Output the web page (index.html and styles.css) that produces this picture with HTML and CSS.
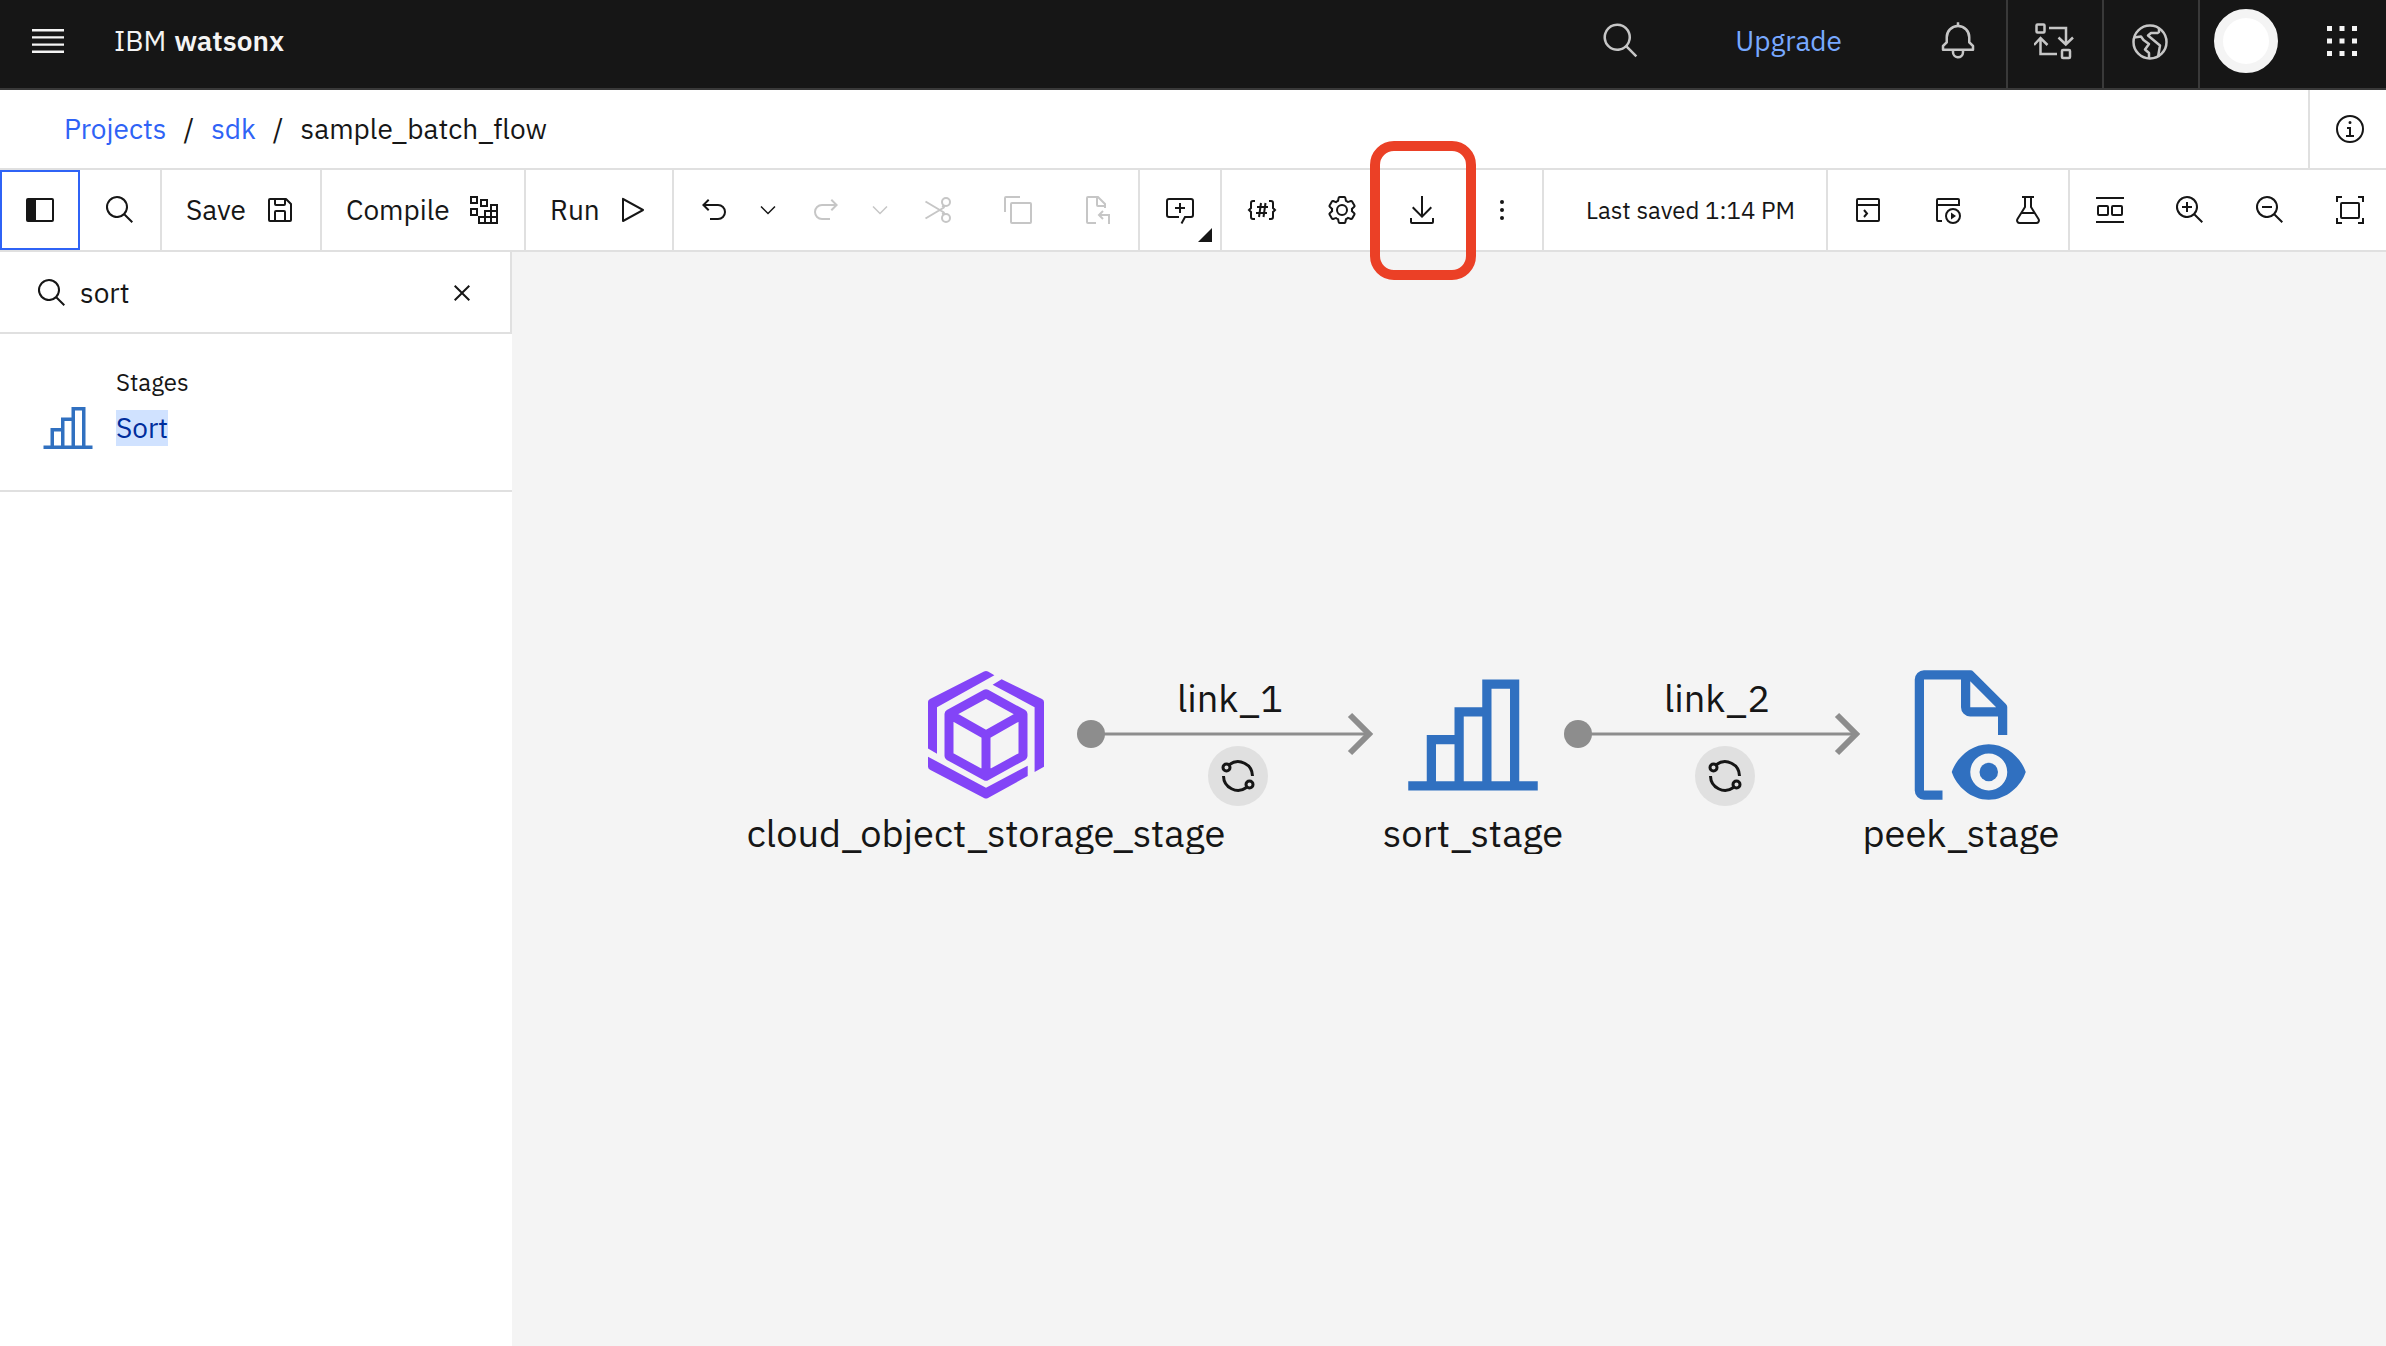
FILE: index.html
```html
<!DOCTYPE html>
<html lang="en">
<head>
<meta charset="utf-8">
<meta name="viewport" content="width=device-width, initial-scale=1">
<title>sample_batch_flow - IBM watsonx</title>
<link rel="stylesheet" href="styles.css">
</head>
<body>
<svg class="symbols" aria-hidden="true">
  <symbol id="search" viewBox="0 0 32 32"><path d="M29 27.586l-7.552-7.552a11.018 11.018 0 1 0-1.414 1.414L27.586 29zM4 13a9 9 0 1 1 9 9a9.01 9.01 0 0 1-9-9z"/></symbol>
  <symbol id="chevron" viewBox="0 0 32 32"><path d="M16 22L6 12l1.4-1.4 8.6 8.6 8.6-8.6L26 12z"/></symbol>
  <symbol id="undo" viewBox="0 0 32 32"><path d="M20 10H7.815l3.587-3.586L10 5 4 11l6 6 1.402-1.415L7.818 12H20a6 6 0 0 1 0 12H12v2h8a8 8 0 0 0 0-16z"/></symbol>
  <symbol id="bars" viewBox="0 0 32 32"><path d="M2 26h4V16h6v-6h6V4h8v22h4v2H2zM8 18v8h4v-8zM14 12v14h4V12zM20 6v20h4V6z"/></symbol>
  <symbol id="sync" viewBox="-20 -20 40 40"><g fill="none" stroke="currentColor" stroke-width="3"><circle cx="-11.500" cy="-8.500" r="3.500"/><circle cx="11.500" cy="8.500" r="3.500"/><path d="M-8.500-11.500A14.500 14.500 0 0 1 14.500 0M8.500 11.500A14.500 14.500 0 0 1-14.500 0"/></g></symbol>
</svg>

<header class="topbar">
  <button class="menu" aria-label="Menu"><svg viewBox="0 0 20 20"><path d="M2 4h16v1.200H2zM2 7.600h16v1.200H2zM2 11.200h16v1.200H2zM2 14.800h16V16H2z"/></svg></button>
  <a class="brand" href="#">IBM <b>watsonx</b></a>
  <button class="top-search" aria-label="Search"><svg><use href="#search"/></svg></button>
  <a class="upgrade" href="#">Upgrade</a>
  <button class="cell" aria-label="Notifications"><svg viewBox="0 0 32 32"><path d="M28.707 19.293L26 16.586V13a10.014 10.014 0 0 0-9-9.950V1h-2v2.050A10.014 10.014 0 0 0 6 13v3.586l-2.707 2.707A1 1 0 0 0 3 20v3a1 1 0 0 0 1 1h7v.777a5.152 5.152 0 0 0 4.500 5.199A5.006 5.006 0 0 0 21 25v-1h7a1 1 0 0 0 1-1v-3a1 1 0 0 0-.293-.707zM19 25a3 3 0 0 1-6 0v-1h6zm8-3H5v-1.586l2.707-2.707A1 1 0 0 0 8 17v-4a8 8 0 0 1 16 0v4a1 1 0 0 0 .293.707L27 20.414z"/></svg></button>
  <button class="cell" aria-label="Switch workspace"><svg viewBox="0 0 40 40"><g fill="none" stroke="currentColor" stroke-width="2.500"><rect x="2.500" y="3.500" width="8" height="8" rx="1"/><rect x="28" y="29" width="8" height="8" rx="1"/><path d="M15 7h17v16M24.500 16.500l7.300 7 7.200-7M23 33H6.500V17M0 24l6.500-7 7 7"/></g></svg></button>
  <button class="cell" aria-label="Region"><svg viewBox="-20 -21 40 40"><g fill="none" stroke="currentColor" stroke-width="2.500" stroke-linejoin="round"><circle r="16.500"/><path d="M-16-4.500L-9-5.500-6.500-2-1 2l-4 5.500L-1 11v6M9-14v4l-1.500 1H1L-2-6.500 10 3.500 8 15"/></g></svg></button>
  <button class="account" aria-label="Account"><span class="avatar"></span></button>
  <button class="cell last" aria-label="App switcher"><svg viewBox="0 0 32 32"><path d="M4 4h4v4H4zM14 4h4v4h-4zM24 4h4v4h-4zM4 14h4v4H4zM14 14h4v4h-4zM24 14h4v4h-4zM4 24h4v4H4zM14 24h4v4h-4zM24 24h4v4h-4z"/></svg></button>
</header>

<nav class="crumbs" aria-label="Breadcrumb">
  <ol>
    <li><a href="#">Projects</a></li>
    <li><a href="#">sdk</a></li>
    <li aria-current="page">sample_batch_flow</li>
  </ol>
  <button class="info" aria-label="Information"><svg viewBox="0 0 32 32"><path d="M17 22v-8h-4v2h2v6h-3v2h8v-2zM16 8a1.500 1.500 0 1 0 0 3 1.500 1.500 0 0 0 0-3z"/><circle cx="16" cy="16" r="13" fill="none" stroke="currentColor" stroke-width="2"/></svg></button>
</nav>

<div class="toolbar" role="toolbar" aria-label="Flow">
  <div class="group">
    <button class="tool active" aria-label="Palette"><svg viewBox="0 0 32 32"><path d="M28 4H4a2 2 0 0 0-2 2v20a2 2 0 0 0 2 2h24a2 2 0 0 0 2-2V6a2 2 0 0 0-2-2zm0 22H12V6h16z"/></svg></button>
    <button class="tool" aria-label="Find"><svg><use href="#search"/></svg></button>
  </div>
  <div class="group"><button class="labeled save">Save <svg viewBox="0 0 32 32"><path d="M27.710 9.290l-5-5A1 1 0 0 0 22 4H6a2 2 0 0 0-2 2v20a2 2 0 0 0 2 2h20a2 2 0 0 0 2-2V10a1 1 0 0 0-.290-.710zM12 6h8v4h-8zm8 20h-8v-8h8zm2 0v-8a2 2 0 0 0-2-2h-8a2 2 0 0 0-2 2v8H6V6h4v4a2 2 0 0 0 2 2h8a2 2 0 0 0 2-2V6.410l4 4V26z"/></svg></button></div>
  <div class="group"><button class="labeled compile">Compile <svg viewBox="0 0 32 32"><path fill="none" stroke="currentColor" stroke-width="2" d="M3 3h6v6H3zM13 6h6v6h-6zM3 15h6v6H3zM23 11h6v6h-6zM17 17h6v6h-6zM23 17h6v6h-6zM11 23h6v6h-6zM17 23h6v6h-6zM23 23h6v6h-6z"/></svg></button></div>
  <div class="group"><button class="labeled run">Run <svg viewBox="0 0 32 32"><path d="M7 28a1 1 0 0 1-1-1V5a1 1 0 0 1 1.482-.876l20 11a1 1 0 0 1 0 1.752l-20 11A1 1 0 0 1 7 28zM8 6.690v18.620L24.925 16z"/></svg></button></div>
  <div class="group">
    <button class="tool" aria-label="Undo"><svg><use href="#undo"/></svg></button>
    <button class="drop" aria-label="Undo history"><svg><use href="#chevron"/></svg></button>
    <button class="tool" aria-label="Redo" disabled><svg class="flip"><use href="#undo"/></svg></button>
    <button class="drop" aria-label="Redo history" disabled><svg><use href="#chevron"/></svg></button>
    <button class="tool" aria-label="Cut" disabled><svg viewBox="0 0 32 32"><g fill="none" stroke="currentColor" stroke-width="2"><circle cx="24" cy="8" r="4"/><circle cx="24" cy="24" r="4"/><path d="M3.500 7.500L22 18.500M3.500 24.500L22 13.500M20 12l3 1M20 20l3-1"/></g></svg></button>
    <button class="tool" aria-label="Copy" disabled><svg viewBox="0 0 32 32"><path d="M28 10v18H10V10h18m0-2H10a2 2 0 0 0-2 2v18a2 2 0 0 0 2 2h18a2 2 0 0 0 2-2V10a2 2 0 0 0-2-2z"/><path d="M4 18H2V4a2 2 0 0 1 2-2h14v2H4z"/></svg></button>
    <button class="tool" aria-label="Paste" disabled><svg viewBox="0 0 32 32"><path fill="none" stroke="currentColor" stroke-width="2" d="M14 29H6a1 1 0 0 1-1-1V4a1 1 0 0 1 1-1h10l7 7v4M15 3v8a1 1 0 0 0 1 1h7M27 30v-9H17M21 17l-4 4 4 4"/></svg></button>
  </div>
  <div class="group"><button class="tool more" aria-label="Add comment"><svg viewBox="0 0 32 32"><path fill="none" stroke="currentColor" stroke-width="2" d="M15 23H5a2 2 0 0 1-2-2V7a2 2 0 0 1 2-2h22a2 2 0 0 1 2 2v14a2 2 0 0 1-2 2h-6l-3.500 6.500M16 9v10M11 14h10"/></svg></button></div>
  <div class="group">
    <button class="tool" aria-label="Parameters"><svg viewBox="0 0 32 32"><path fill="none" stroke="currentColor" stroke-width="2" d="M9 7H7a2 2 0 0 0-2 2v5l-2 2 2 2v5a2 2 0 0 0 2 2h2M23 7h2a2 2 0 0 1 2 2v5l2 2-2 2v5a2 2 0 0 1-2 2h-2M15 9l-2 14M19.500 9l-2 14M11 13h11M10 19h11"/></svg></button>
    <button class="tool" aria-label="Settings"><svg viewBox="0 0 32 32"><path d="M27 16.760V15.230l1.920-1.680A2 2 0 0 0 29.300 11L26.940 7a2 2 0 0 0-1.730-1 2 2 0 0 0-.640.100l-2.430.820a11.350 11.350 0 0 0-1.310-.750l-.510-2.520a2 2 0 0 0-2-1.610H13.640a2 2 0 0 0-2 1.610l-.510 2.520a11.480 11.480 0 0 0-1.320.750L7.430 6.060A2 2 0 0 0 6.790 6 2 2 0 0 0 5.060 7L2.700 11a2 2 0 0 0 .410 2.510L5 15.240v1.530l-1.890 1.680A2 2 0 0 0 2.700 21l2.360 4a2 2 0 0 0 1.730 1 2 2 0 0 0 .640-.100l2.430-.820a11.350 11.350 0 0 0 1.310.750l.510 2.520a2 2 0 0 0 2 1.610h4.720a2 2 0 0 0 2-1.610l.510-2.520a11.480 11.480 0 0 0 1.320-.750l2.420.820a2 2 0 0 0 .640.100 2 2 0 0 0 1.730-1l2.280-4a2 2 0 0 0-.410-2.510zM25.210 24l-3.430-1.160a8.860 8.860 0 0 1-2.710 1.570L18.360 28H13.640l-.710-3.550a9.360 9.360 0 0 1-2.700-1.570L6.790 24 4.430 20l2.720-2.400a8.900 8.900 0 0 1 0-3.130L4.430 12 6.790 8l3.430 1.160a8.860 8.860 0 0 1 2.710-1.570L13.640 4h4.720l.710 3.550a9.360 9.360 0 0 1 2.700 1.570L25.210 8l2.360 4-2.720 2.400a8.900 8.900 0 0 1 0 3.130L27.570 20z"/><circle cx="16" cy="16" r="5" fill="none" stroke="currentColor" stroke-width="2"/></svg></button>
    <button class="tool marked" aria-label="Download"><svg viewBox="0 0 32 32"><path d="M26 24v4H6v-4H4v4a2 2 0 0 0 2 2h20a2 2 0 0 0 2-2v-4zM26 14l-1.410-1.410L17 20.170V2h-2v18.170l-7.590-7.580L6 14l10 10z"/></svg></button>
    <button class="tool" aria-label="More"><svg viewBox="0 0 32 32"><circle cx="16" cy="8" r="2"/><circle cx="16" cy="16" r="2"/><circle cx="16" cy="24" r="2"/></svg></button>
  </div>
  <div class="group status">Last saved 1:14 PM</div>
  <div class="group">
    <button class="tool" aria-label="Console"><svg viewBox="0 0 32 32"><path fill="none" stroke="currentColor" stroke-width="2" d="M6 5h20a1 1 0 0 1 1 1v20a1 1 0 0 1-1 1H6a1 1 0 0 1-1-1V6a1 1 0 0 1 1-1zM5 11h22M12 16l3 3.500-3 3.500"/></svg></button>
    <button class="tool" aria-label="Run history"><svg viewBox="0 0 32 32"><path fill="none" stroke="currentColor" stroke-width="2" d="M10 27H6a1 1 0 0 1-1-1V6a1 1 0 0 1 1-1h20a1 1 0 0 1 1 1v5H5"/><circle cx="21" cy="22" r="7" fill="none" stroke="currentColor" stroke-width="2"/><path d="M19 18.500v7l5-3.500z"/></svg></button>
    <button class="tool" aria-label="Test"><svg viewBox="0 0 32 32"><path fill="none" stroke="currentColor" stroke-width="2" d="M10 3h12M13 3v10L5.500 25a2.600 2.600 0 0 0 2.200 4h16.600a2.600 2.600 0 0 0 2.200-4L19 13V3M9.500 19h13"/></svg></button>
  </div>
  <div class="group end">
    <button class="tool" aria-label="Arrange"><svg viewBox="0 0 32 32"><path fill="none" stroke="currentColor" stroke-width="2" d="M2 4h28M2 28h28"/><g fill="none" stroke="currentColor" stroke-width="2"><rect x="4" y="12" width="10" height="9" rx="1"/><rect x="18" y="12" width="10" height="9" rx="1"/></g></svg></button>
    <button class="tool" aria-label="Zoom in"><svg viewBox="0 0 32 32"><use href="#search"/><path d="M18 12h-4V8h-2v4H8v2h4v4h2v-4h4z"/></svg></button>
    <button class="tool" aria-label="Zoom out"><svg viewBox="0 0 32 32"><use href="#search"/><path d="M8 12h10v2H8z"/></svg></button>
    <button class="tool" aria-label="Zoom to fit"><svg viewBox="0 0 32 32"><g fill="none" stroke="currentColor" stroke-width="2"><rect x="7" y="9" width="18" height="15" rx="1"/><path d="M3 8V3h5M24 3h5v5M29 24v5h-5M8 29H3v-5"/></g></svg></button>
  </div>
</div>

<main class="workspace">
  <aside class="palette">
    <div class="finder">
      <label for="find"><svg aria-label="Search"><use href="#search"/></svg></label>
      <input id="find" type="text" value="sort">
      <button aria-label="Clear"><svg viewBox="0 0 32 32"><path d="M24 9.400L22.600 8 16 14.600 9.400 8 8 9.400l6.600 6.600L8 22.600 9.400 24l6.600-6.600 6.600 6.600 1.400-1.400-6.600-6.600z"/></svg></button>
    </div>
    <div class="result">
      <svg><use href="#bars"/></svg>
      <div class="result-text"><span>Stages</span><mark>Sort</mark></div>
    </div>
  </aside>
  <section class="canvas" aria-label="Flow canvas">
    <div class="node storage">
      <svg viewBox="-74 -74 148 148"><path d="M8.400-59.700L2-63.500q-2-1-4 0L-56-36q-2 1-2 3v46.500l9 5.200v-46.400zM15.600-55.700l-9 5.400 42 22.600V37l9.400-5.300V-33q0-2-2-3zM-58 21.700v10q0 2 2 3L-2 63q2 1 4 0L41.700 41V30.700L0 52.700z"/><path fill="none" stroke="currentColor" stroke-width="9" stroke-linejoin="round" d="M0-41.200L37-21v42L0 41.200-37 21v-42zM-37-21L0 0l37-21M0 0v41"/></svg>
      <span>cloud_object_storage_stage</span>
    </div>
    <div class="node sorter"><svg><use href="#bars"/></svg><span>sort_stage</span></div>
    <div class="node peek">
      <svg viewBox="0 0 32 32"><path d="M12 28H8V4h8v6a2 2 0 0 0 2 2h6v4h2v-6a.910.910 0 0 0-.300-.700l-7-7A.910.910 0 0 0 18 2H8a2 2 0 0 0-2 2v24a2 2 0 0 0 2 2h4zM18 4.400l5.600 5.600H18z"/><path fill-rule="evenodd" d="M22 18c3.900 0 7 3 8 6-1 3-4.100 6-8 6s-7-3-8-6c1-3 4.100-6 8-6zm0 2a4 4 0 1 0 0 8 4 4 0 0 0 0-8z"/><circle cx="22" cy="24" r="2"/></svg>
      <span>peek_stage</span>
    </div>
    <div class="link first">
      <span>link_1</span>
      <svg class="arrow" viewBox="0 0 300 44"><circle cx="14" cy="22" r="14"/><path fill="none" stroke="currentColor" stroke-width="3" d="M14 22h278"/><path fill="none" stroke="currentColor" stroke-width="6" d="M273 3l19 19-19 19"/></svg>
      <button aria-label="Partitioning of link_1"><svg><use href="#sync"/></svg></button>
    </div>
    <div class="link second">
      <span>link_2</span>
      <svg class="arrow" viewBox="0 0 300 44"><circle cx="14" cy="22" r="14"/><path fill="none" stroke="currentColor" stroke-width="3" d="M14 22h278"/><path fill="none" stroke="currentColor" stroke-width="6" d="M273 3l19 19-19 19"/></svg>
      <button aria-label="Partitioning of link_2"><svg><use href="#sync"/></svg></button>
    </div>
  </section>
</main>
</body>
</html>
```
FILE: styles.css
```css
* { box-sizing: border-box; }

body {
  margin: 0;
  min-height: 100vh;
  display: flex;
  flex-direction: column;
  overflow-x: hidden;
  background: #fff;
  color: #161616;
  font: 28px/36px "IBM Plex Sans", "Noto Sans", sans-serif;
}

button {
  border: 0;
  padding: 0;
  background: none;
  color: inherit;
  font: inherit;
  display: flex;
  align-items: center;
  justify-content: center;
  flex: none;
}

a { color: #0f62fe; text-decoration: none; }
svg { width: 32px; height: 32px; fill: currentColor; flex: none; display: block; }
.symbols { position: absolute; width: 0; height: 0; }

/* Global header */
.topbar {
  display: flex;
  height: 90px;
  background: #161616;
  border-bottom: 2px solid #393939;
  color: #f4f4f4;
  overflow: hidden;
}
.topbar > * { padding-bottom: 6px; display: flex; align-items: center; }
.topbar svg { width: 40px; height: 40px; }
.topbar .menu { width: 96px; }
.brand { color: #f4f4f4; padding-left: 18px; gap: 8px; margin-right: auto; }
.brand b { font-weight: 600; }
.top-search { width: 96px; color: #c6c6c6; }
.upgrade { color: #78a9ff; padding: 0 70px 6px 66px; }
.cell { width: 96px; padding-right: 2px; border-right: 2px solid #393939; color: #c6c6c6; }
.cell.last { padding-right: 0; border: 0; color: #f4f4f4; margin-right: -4px; }
.account { width: 94px; padding-right: 2px; }
.avatar {
  width: 64px;
  height: 64px;
  border-radius: 50%;
  background: #fff;
  border: 9px solid #f4f4f4;
}

/* Breadcrumb */
.crumbs {
  display: flex;
  justify-content: space-between;
  height: 80px;
  border-bottom: 2px solid #e0e0e0;
}
.crumbs ol {
  display: flex;
  align-items: center;
  margin: 0;
  padding: 0 64px;
  list-style: none;
}
.crumbs li + li::before { content: "/"; margin: 0 17px; }
.crumbs a { color: #2f63f6; }
.info { width: 78px; border-left: 2px solid #e0e0e0; padding-left: 4px; }

/* Toolbar */
.toolbar {
  display: flex;
  height: 82px;
  border-bottom: 2px solid #e0e0e0;
}
.group { display: flex; flex: none; border-right: 2px solid #e0e0e0; }
.group.status {
  flex: 1;
  align-items: center;
  padding-left: 42px;
  font-size: 24px;
  white-space: nowrap;
}
.group.end { border: 0; margin-right: -4px; }
.tool { width: 80px; position: relative; }
.tool.active { border: 2px solid #2f63f6; }
.tool:disabled, .drop:disabled { color: #c6c6c6; }
.flip { transform: scaleX(-1); }
.labeled { justify-content: space-between; padding: 0 24px; }
.save { width: 158px; }
.compile { width: 202px; }
.run { width: 146px; }
.drop { width: 32px; padding-right: 4px; }
.drop svg { width: 24px; height: 24px; }
.more::after {
  content: "";
  position: absolute;
  right: 8px;
  bottom: 8px;
  border-style: solid;
  border-width: 0 0 14px 14px;
  border-color: transparent transparent #161616;
}
.marked::after {
  content: "";
  position: absolute;
  z-index: 2;
  inset: -29px -14px -30px -12px;
  border: 10px solid #eb4026;
  border-radius: 24px;
}

/* Palette */
.workspace { display: flex; flex: 1; }
.palette { width: 512px; flex: none; background: #fff; }
.finder {
  display: flex;
  align-items: center;
  height: 82px;
  padding: 2px 32px 0 36px;
  border-right: 2px solid #e0e0e0;
  border-bottom: 2px solid #e0e0e0;
}
.finder input {
  flex: 1;
  min-width: 0;
  border: 0;
  padding: 0 12px;
  outline: 0;
  color: inherit;
  background: none;
  font: inherit;
}
.result {
  display: flex;
  align-items: flex-end;
  gap: 20px;
  padding: 28px 40px 34px;
  height: 158px;
  border-bottom: 2px solid #e0e0e0;
}
.result svg { width: 56px; height: 56px; color: #3070c0; }
.result-text {
  display: flex;
  flex-direction: column;
  align-items: flex-start;
  gap: 10px;
  padding-bottom: 10px;
  font-size: 24px;
}
.result mark { font-size: 28px; background: #d0e2ff; color: #002d9c; }

/* Canvas */
.canvas { position: relative; flex: 1; background: #f4f4f4; overflow: hidden; font-size: 38px; line-height: 44px; }
.node {
  position: absolute;
  top: 409px;
  width: 488px;
  display: flex;
  flex-direction: column;
  align-items: center;
}
.node svg { width: 148px; height: 148px; }
.node span { margin-top: 2px; height: 43px; overflow: hidden; }
.storage { left: 230px; color: #8344f7; }
.sorter { left: 717px; color: #3070c0; }
.peek { left: 1205px; color: #3070c0; }
.node span { color: #161616; }
.link {
  position: absolute;
  top: 424px;
  width: 300px;
  display: flex;
  flex-direction: column;
  align-items: center;
}
.link.first { left: 565px; }
.link.second { left: 1052px; }
.link .arrow { width: 300px; height: 44px; color: #8d8d8d; margin-top: -8px; }
.link span { padding-left: 6px; }
.link button {
  width: 60px;
  height: 60px;
  margin: -10px 0 0 22px;
  border-radius: 50%;
  background: #e0e0e0;
}
.link button svg { width: 40px; height: 40px; }
```
